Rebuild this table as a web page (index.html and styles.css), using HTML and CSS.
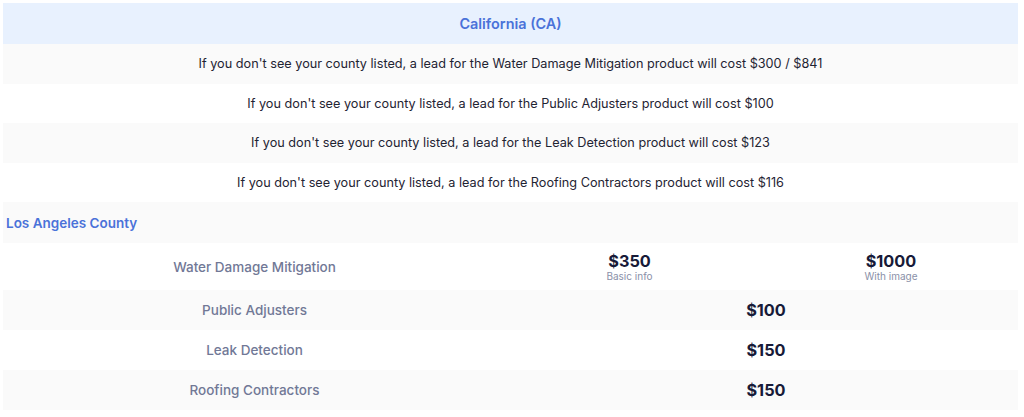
FILE: index.html
```html
<!DOCTYPE html>
<html>
<head>
<meta charset="utf-8">
<link rel="stylesheet" href="styles.css">
</head>
<body>
<div class="table">
  <div class="state">California (CA)</div>
  <div class="note alt">If you don't see your county listed, a lead for the Water Damage Mitigation product will cost $300 / $841</div>
  <div class="note">If you don't see your county listed, a lead for the Public Adjusters product will cost $100</div>
  <div class="note alt">If you don't see your county listed, a lead for the Leak Detection product will cost $123</div>
  <div class="note">If you don't see your county listed, a lead for the Roofing Contractors product will cost $116</div>
  <div class="county alt">Los Angeles County</div>
  <div class="row tall">
    <div class="product">Water Damage Mitigation</div>
    <div class="prices split">
      <div class="price-cell"><span class="price">$350</span><span class="sub">Basic info</span></div>
      <div class="price-cell second"><span class="price">$1000</span><span class="sub">With image</span></div>
    </div>
  </div>
  <div class="row alt">
    <div class="product">Public Adjusters</div>
    <div class="prices"><div class="price-cell single"><span class="price">$100</span></div></div>
  </div>
  <div class="row">
    <div class="product">Leak Detection</div>
    <div class="prices"><div class="price-cell single"><span class="price">$150</span></div></div>
  </div>
  <div class="row alt">
    <div class="product">Roofing Contractors</div>
    <div class="prices"><div class="price-cell single"><span class="price">$150</span></div></div>
  </div>
</div>
</body>
</html>
```
FILE: styles.css
```css
* { box-sizing: border-box; }
body {
  margin: 0;
  padding: 3px 6px 0 3px;
  background: #ffffff;
  font-family: Inter, "Noto Sans", sans-serif;
}
.table {
  display: flex;
  flex-direction: column;
}
.state {
  height: 41px;
  background: #e8f1fe;
  color: #4a72d9;
  font-size: 14.4px;
  font-weight: 600;
  display: flex;
  align-items: center;
  justify-content: center;
}
.note {
  height: 39.5px;
  display: flex;
  align-items: center;
  justify-content: center;
  font-size: 12.7px;
  color: #1f2433;
}
.alt { background: #fafafa; }
.county {
  height: 41px;
  display: flex;
  align-items: center;
  padding-left: 3px;
  font-size: 13.5px;
  font-weight: 600;
  color: #4a72d9;
}
.row {
  height: 40px;
  display: grid;
  grid-template-columns: 503px 1fr;
  align-items: center;
}
.row.tall { height: 47px; }
.product {
  text-align: center;
  font-size: 13.5px;
  font-weight: 500;
  color: #717896;
}
.prices {
  display: grid;
  grid-template-columns: 1fr;
}
.prices.split {
  grid-template-columns: 247px 1fr;
}
.price-cell {
  display: flex;
  flex-direction: column;
  align-items: center;
}
.price-cell.second { padding-left: 11px; }
.price-cell.single { padding-left: 8px; }
.price {
  font-size: 16.3px;
  font-weight: 700;
  color: #171a38;
  line-height: 18px;
}
.sub {
  font-size: 10px;
  color: #8a90a8;
  line-height: 12px;
}
```
